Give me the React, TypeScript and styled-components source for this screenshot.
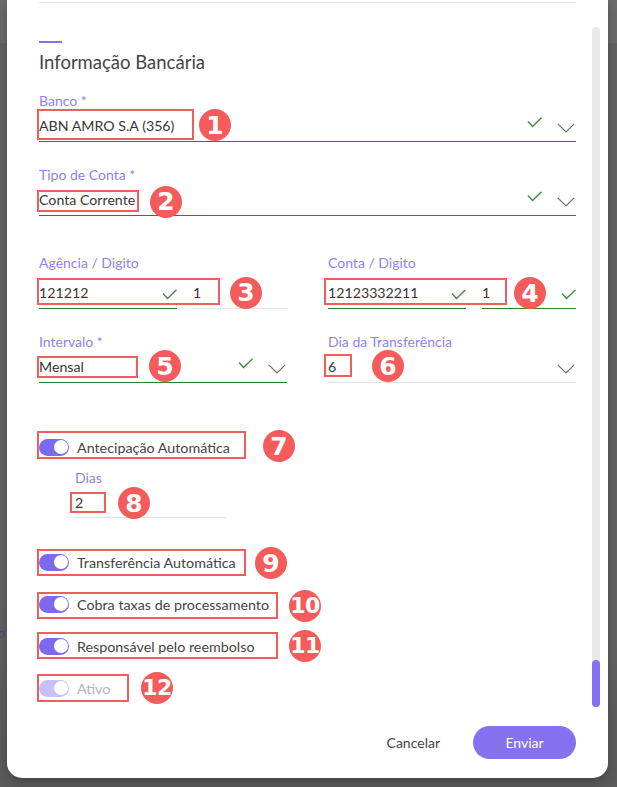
import React from 'react';
import styled, { createGlobalStyle } from 'styled-components';

const GlobalStyle = createGlobalStyle`
  html, body {
    margin: 0;
    padding: 0;
    background: #636363;
  }
  body {
    font-family: Lato, 'Liberation Sans', sans-serif;
  }
`;

const Backdrop = styled.div`
  position: relative;
  width: 617px;
  height: 787px;
  overflow: hidden;
  box-sizing: border-box;
  padding-left: 7px;
  background: linear-gradient(#6c6c6c 0 43px, #636363 43px 600px, #5a5a5a);
`;

// bit of the page behind the overlay that peeks out on the left
const BehindText = styled.span`
  position: absolute;
  left: -3px;
  top: 624px;
  font-size: 14px;
  color: #46457a;
`;

const Modal = styled.div`
  width: 601px;
  height: 778px;
  background: #fff;
  border-radius: 0 0 15px 15px;
  box-shadow: 0 4px 12px rgba(0, 0, 0, 0.25);
  display: flex;
  flex-direction: column;
`;

const Body = styled.div`
  display: flex;
  height: 710px;
`;

const Content = styled.div`
  width: 537px;
  margin-left: 32px;
  display: flex;
  flex-direction: column;
`;

const Scrollbar = styled.div`
  width: 8px;
  height: 680px;
  margin: 27px 0 0 16px;
  background: #e9e9e9;
  border-radius: 4px;
  display: flex;
  align-items: flex-end;
`;

const Thumb = styled.div`
  width: 8px;
  height: 47px;
  border-radius: 4px;
  background: #8672f0;
`;

const Divider = styled.div`
  margin-top: 2px;
  height: 1px;
  background: #e8e8e8;
`;

const Accent = styled.div`
  margin-top: 38px;
  width: 23px;
  height: 2px;
  background: #8470f0;
`;

const Title = styled.h2`
  margin: 7px 0 0;
  font-size: 18.5px;
  line-height: 24px;
  font-weight: 400;
  color: #444;
`;

const Field = styled.div<{ $mt?: number; $ml?: number; $w?: number }>`
  margin-top: ${(p) => p.$mt ?? 0}px;
  margin-left: ${(p) => p.$ml ?? 0}px;
  width: ${(p) => (p.$w ? `${p.$w}px` : 'auto')};
  display: flex;
  flex-direction: column;
`;

const Columns = styled.div<{ $mt: number }>`
  margin-top: ${(p) => p.$mt}px;
  display: grid;
  grid-template-columns: 248px 248px;
  column-gap: 41px;
`;

const Label = styled.div`
  font-size: 14px;
  line-height: 16px;
  color: #8f81f5;
`;

const SelectRow = styled.div<{ $valid?: boolean; $h?: number }>`
  position: relative;
  height: ${(p) => p.$h ?? 33}px;
  box-sizing: border-box;
  display: flex;
  align-items: center;
  padding-top: 1px;
  border-bottom: 1px solid ${(p) => (p.$valid ? '#2e7d32' : '#e3e3e3')};
`;

const InputPair = styled.div`
  position: relative;
  display: flex;
  gap: 16px;
`;

const TextInput = styled.div<{ $valid?: boolean; $w?: number }>`
  height: 38px;
  box-sizing: border-box;
  padding-top: 6px;
  display: flex;
  align-items: center;
  ${(p) => (p.$w ? `width: ${p.$w}px;` : 'flex: 1;')}
  border-bottom: 1px solid ${(p) => (p.$valid ? '#2e7d32' : '#e3e3e3')};
`;

const Value = styled.span`
  flex: 1;
  font-size: 14.2px;
  color: #363636;
  white-space: nowrap;
`;

const SelectCheck = styled.span`
  display: flex;
  margin: 0 15px 7px 0;
`;

const InputCheck = styled.span`
  display: flex;
  margin-top: 4px;
`;

const ChevronSlot = styled.span`
  display: flex;
  margin: 5px 1px 0 0;
`;

const ToggleRow = styled.div<{ $mt: number; $disabled?: boolean }>`
  position: relative;
  margin-top: ${(p) => p.$mt}px;
  height: 30px;
  display: flex;
  align-items: center;
  gap: 8px;
  font-size: 14.3px;
  color: ${(p) => (p.$disabled ? '#b4b4b4' : '#444')};
`;

const Switch = styled.span<{ $disabled?: boolean }>`
  width: 30px;
  height: 17px;
  box-sizing: border-box;
  padding: 0 1.5px;
  border-radius: 9px;
  background: ${(p) => (p.$disabled ? '#c8c0f9' : '#7b6af0')};
  display: flex;
  align-items: center;
  justify-content: flex-end;
  flex-shrink: 0;
`;

const Knob = styled.span`
  width: 14px;
  height: 14px;
  border-radius: 50%;
  background: #fff;
`;

// annotation overlays (red outline + numbered dot)
const Mark = styled.span<{ $x: number; $y: number; $w: number; $h: number }>`
  position: absolute;
  left: ${(p) => p.$x}px;
  top: ${(p) => p.$y}px;
  width: ${(p) => p.$w}px;
  height: ${(p) => p.$h}px;
  box-sizing: border-box;
  border: 2px solid #ef5d5d;
  pointer-events: none;
`;

const Badge = styled.span<{ $cx: number; $cy: number; $wide?: boolean }>`
  position: absolute;
  left: ${(p) => p.$cx - 16}px;
  top: ${(p) => p.$cy - 16}px;
  width: 32px;
  height: 32px;
  border-radius: 50%;
  background: #f45c5c;
  color: #fff;
  display: flex;
  align-items: center;
  justify-content: center;
  font-family: 'DejaVu Sans', 'Liberation Sans', sans-serif;
  font-weight: 700;
  font-size: ${(p) => (p.$wide ? 22 : 25)}px;
  letter-spacing: ${(p) => (p.$wide ? -0.5 : 0)}px;
  line-height: 1;
  z-index: 2;
`;

const Footer = styled.div`
  display: flex;
  justify-content: flex-end;
  align-items: center;
  padding: 16px 32px 0 0;
`;

const CancelButton = styled.button`
  border: none;
  background: none;
  padding: 0;
  margin-right: 33px;
  font-family: inherit;
  font-size: 14px;
  color: #444;
`;

const SubmitButton = styled.button`
  width: 103px;
  height: 33px;
  border: none;
  border-radius: 17px;
  background: #8672f0;
  color: #fff;
  font-family: inherit;
  font-size: 14px;
`;

const Check = () => (
  <svg width="15" height="11" viewBox="0 0 15 11">
    <path d="M1 4.5 L5.5 9.5 L14.5 0.8" fill="none" stroke="#3c8c3c" strokeWidth="1.3" />
  </svg>
);

const Chevron = () => (
  <svg width="18" height="10" viewBox="0 0 18 10">
    <path d="M0.8 0.8 L9 9 L17.2 0.8" fill="none" stroke="#6f6f6f" strokeWidth="1.2" />
  </svg>
);

type ToggleProps = {
  label: string;
  mt: number;
  n: number;
  mark: [number, number, number];
  badge: [number, number];
  disabled?: boolean;
};

const Toggle = ({ label, mt, n, mark, badge, disabled }: ToggleProps) => (
  <ToggleRow $mt={mt} $disabled={disabled}>
    <Switch $disabled={disabled}>
      <Knob />
    </Switch>
    {label}
    <Mark $x={-2.4} $y={mark[0]} $w={mark[2]} $h={mark[1]} />
    <Badge $cx={badge[0]} $cy={badge[1]} $wide={n > 9}>
      {n}
    </Badge>
  </ToggleRow>
);

export default function App() {
  return (
    <Backdrop>
      <GlobalStyle />
      <BehindText>o</BehindText>
      <Modal>
        <Body>
          <Content>
            <Divider />
            <Accent />
            <Title>Informação Bancária</Title>

            <Field $mt={19}>
              <Label>Banco *</Label>
              <SelectRow $valid>
                <Value>ABN AMRO S.A (356)</Value>
                <SelectCheck>
                  <Check />
                </SelectCheck>
                <ChevronSlot>
                  <Chevron />
                </ChevronSlot>
                <Mark $x={-2.4} $y={0} $w={157} $h={31} />
                <Badge $cx={176} $cy={16}>1</Badge>
              </SelectRow>
            </Field>

            <Field $mt={25}>
              <Label>Tipo de Conta *</Label>
              <SelectRow $valid>
                <Value>Conta Corrente</Value>
                <SelectCheck>
                  <Check />
                </SelectCheck>
                <ChevronSlot>
                  <Chevron />
                </ChevronSlot>
                <Mark $x={-2.4} $y={7} $w={102} $h={22} />
                <Badge $cx={127} $cy={18.5}>2</Badge>
              </SelectRow>
            </Field>

            <Columns $mt={39}>
              <Field>
                <Label>Agência / Digito</Label>
                <InputPair>
                  <TextInput $valid $w={138}>
                    <Value>121212</Value>
                    <InputCheck>
                      <Check />
                    </InputCheck>
                  </TextInput>
                  <TextInput>
                    <Value>1</Value>
                  </TextInput>
                  <Mark $x={-2.4} $y={6.7} $w={183} $h={27} />
                  <Badge $cx={207} $cy={21.5}>3</Badge>
                </InputPair>
              </Field>
              <Field>
                <Label>Conta / Digito</Label>
                <InputPair>
                  <TextInput $valid $w={138}>
                    <Value>12123332211</Value>
                    <InputCheck>
                      <Check />
                    </InputCheck>
                  </TextInput>
                  <TextInput $valid>
                    <Value>1</Value>
                    <InputCheck>
                      <Check />
                    </InputCheck>
                  </TextInput>
                  <Mark $x={-4.4} $y={6.7} $w={183.4} $h={27} />
                  <Badge $cx={202} $cy={22}>4</Badge>
                </InputPair>
              </Field>
            </Columns>

            <Columns $mt={25}>
              <Field>
                <Label>Intervalo *</Label>
                <SelectRow $valid>
                  <Value>Mensal</Value>
                  <SelectCheck>
                    <Check />
                  </SelectCheck>
                  <ChevronSlot>
                    <Chevron />
                  </ChevronSlot>
                  <Mark $x={-2.4} $y={6} $w={101} $h={21.5} />
                  <Badge $cx={126} $cy={16}>5</Badge>
                </SelectRow>
              </Field>
              <Field>
                <Label>Dia da Transferência</Label>
                <SelectRow>
                  <Value>6</Value>
                  <ChevronSlot>
                    <Chevron />
                  </ChevronSlot>
                  <Mark $x={-4.4} $y={4.3} $w={28} $h={23} />
                  <Badge $cx={60} $cy={16}>6</Badge>
                </SelectRow>
              </Field>
            </Columns>

            <Toggle label="Antecipação Automática" mt={49} n={7} mark={[-1, 28.3, 209.4]} badge={[240, 14]} />

            <Field $mt={8} $ml={36} $w={152}>
              <Label>Dias</Label>
              <SelectRow $h={32}>
                <Value>2</Value>
                <Mark $x={-5} $y={6} $w={36.3} $h={20.6} />
                <Badge $cx={59} $cy={17.3}>8</Badge>
              </SelectRow>
            </Field>

            <Toggle label="Transferência Automática" mt={29} n={9} mark={[1.7, 27.7, 209.4]} badge={[232, 16]} />
            <Toggle label="Cobra taxas de processamento" mt={12} n={10} mark={[3.4, 26.6, 241]} badge={[266, 16.5]} />
            <Toggle label="Responsável pelo reembolso" mt={12} n={11} mark={[1.4, 26.6, 241]} badge={[266, 14.7]} />
            <Toggle label="Ativo" mt={12} n={12} mark={[0.7, 28.7, 92]} badge={[118, 15]} disabled />
          </Content>
          <Scrollbar>
            <Thumb />
          </Scrollbar>
        </Body>
        <Footer>
          <CancelButton>Cancelar</CancelButton>
          <SubmitButton>Enviar</SubmitButton>
        </Footer>
      </Modal>
    </Backdrop>
  );
}
